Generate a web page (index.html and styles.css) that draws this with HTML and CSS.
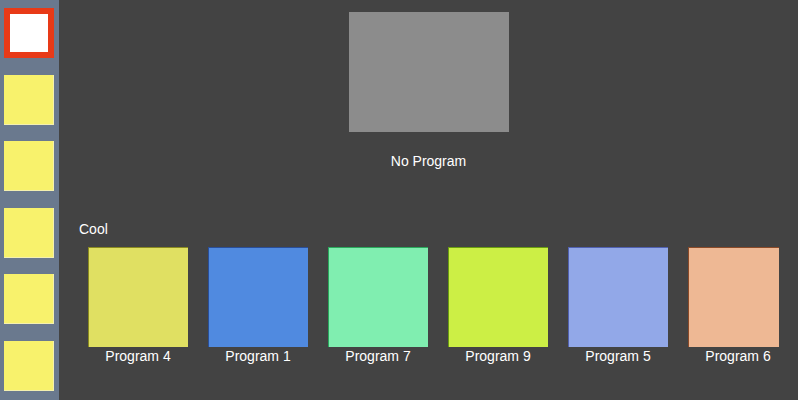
FILE: index.html
```html
<!DOCTYPE html>
<html lang="en">

<head>
    <meta charset="UTF-8">
    <title>Programs</title>
    <link rel="stylesheet" href="styles.css">
</head>

<body>
    <div class="app">
        <!-- Slot sidebar -->
        <div class="sidebar">
            <div class="slot selected"></div>
            <div class="slot"></div>
            <div class="slot"></div>
            <div class="slot"></div>
            <div class="slot"></div>
            <div class="slot"></div>
        </div>

        <div class="main">
            <div class="preview">
                <div class="preview-box"></div>
                <p class="preview-name">No Program</p>
            </div>

            <div class="group">
                <h3>Cool</h3>
                <div class="programs">
                    <div class="program">
                        <div class="tile yellow"></div>
                        <span>Program 4</span>
                    </div>
                    <div class="program">
                        <div class="tile blue"></div>
                        <span>Program 1</span>
                    </div>
                    <div class="program">
                        <div class="tile mint"></div>
                        <span>Program 7</span>
                    </div>
                    <div class="program">
                        <div class="tile lime"></div>
                        <span>Program 9</span>
                    </div>
                    <div class="program">
                        <div class="tile periwinkle"></div>
                        <span>Program 5</span>
                    </div>
                    <div class="program">
                        <div class="tile peach"></div>
                        <span>Program 6</span>
                    </div>
                </div>
            </div>
        </div>
    </div>
</body>

</html>
```

FILE: styles.css
```css
body {
    font-family: "Helvetica Neue", "Liberation Sans", Arial, sans-serif;
    background-color: #434343;
    color: #ffffff;
    margin: 0;
    padding: 0;
}

.app {
    display: flex;
    height: 400px;
    overflow: hidden;
}

.sidebar {
    width: 59px;
    flex-shrink: 0;
    background-color: #6a798e;
    display: flex;
    flex-direction: column;
    gap: 16.6px;
    padding: 8px 0 0 4px;
    box-sizing: border-box;
}

.slot {
    width: 50px;
    height: 50px;
    box-sizing: border-box;
    background-color: #f8f26c;
    border-right: 1px solid #f4f0b0;
    border-bottom: 1px solid #f4f0b0;
    flex-shrink: 0;
}

.slot.selected {
    background-color: #ffffff;
    border: 6px solid #e83a18;
}

.main {
    flex: 1;
    min-width: 0;
}

.preview {
    display: flex;
    flex-direction: column;
    align-items: center;
    padding-top: 12px;
}

.preview-box {
    width: 160px;
    height: 120px;
    background-color: #8c8c8c;
}

.preview-name {
    margin: 21px 0 0;
    font-size: 14px;
    line-height: 16px;
}

.group {
    padding: 52px 19px 0 20px;
}

.group h3 {
    margin: 0;
    font-size: 14px;
    font-weight: normal;
    line-height: 16px;
}

.programs {
    display: flex;
    gap: 20px;
    padding: 10px 0 0 9px;
    overflow: hidden;
}

.program {
    display: flex;
    flex-direction: column;
    align-items: center;
    flex-shrink: 0;
    width: 100px;
    font-size: 14px;
}

.tile {
    width: 100px;
    height: 100px;
    box-sizing: border-box;
    border-top: 1px solid;
    border-left: 1px solid;
}

.program span {
    line-height: 16px;
    margin-top: 1px;
}

.yellow { background-color: #e0e062; border-color: #8a8a20; }
.blue { background-color: #508ae0; border-color: #2a4e98; }
.mint { background-color: #80eeb0; border-color: #2aa85c; }
.lime { background-color: #ccef45; border-color: #6a9c10; }
.periwinkle { background-color: #92a8e8; border-color: #5060b0; }
.peach { background-color: #eeb894; border-color: #8a4a28; }
```
